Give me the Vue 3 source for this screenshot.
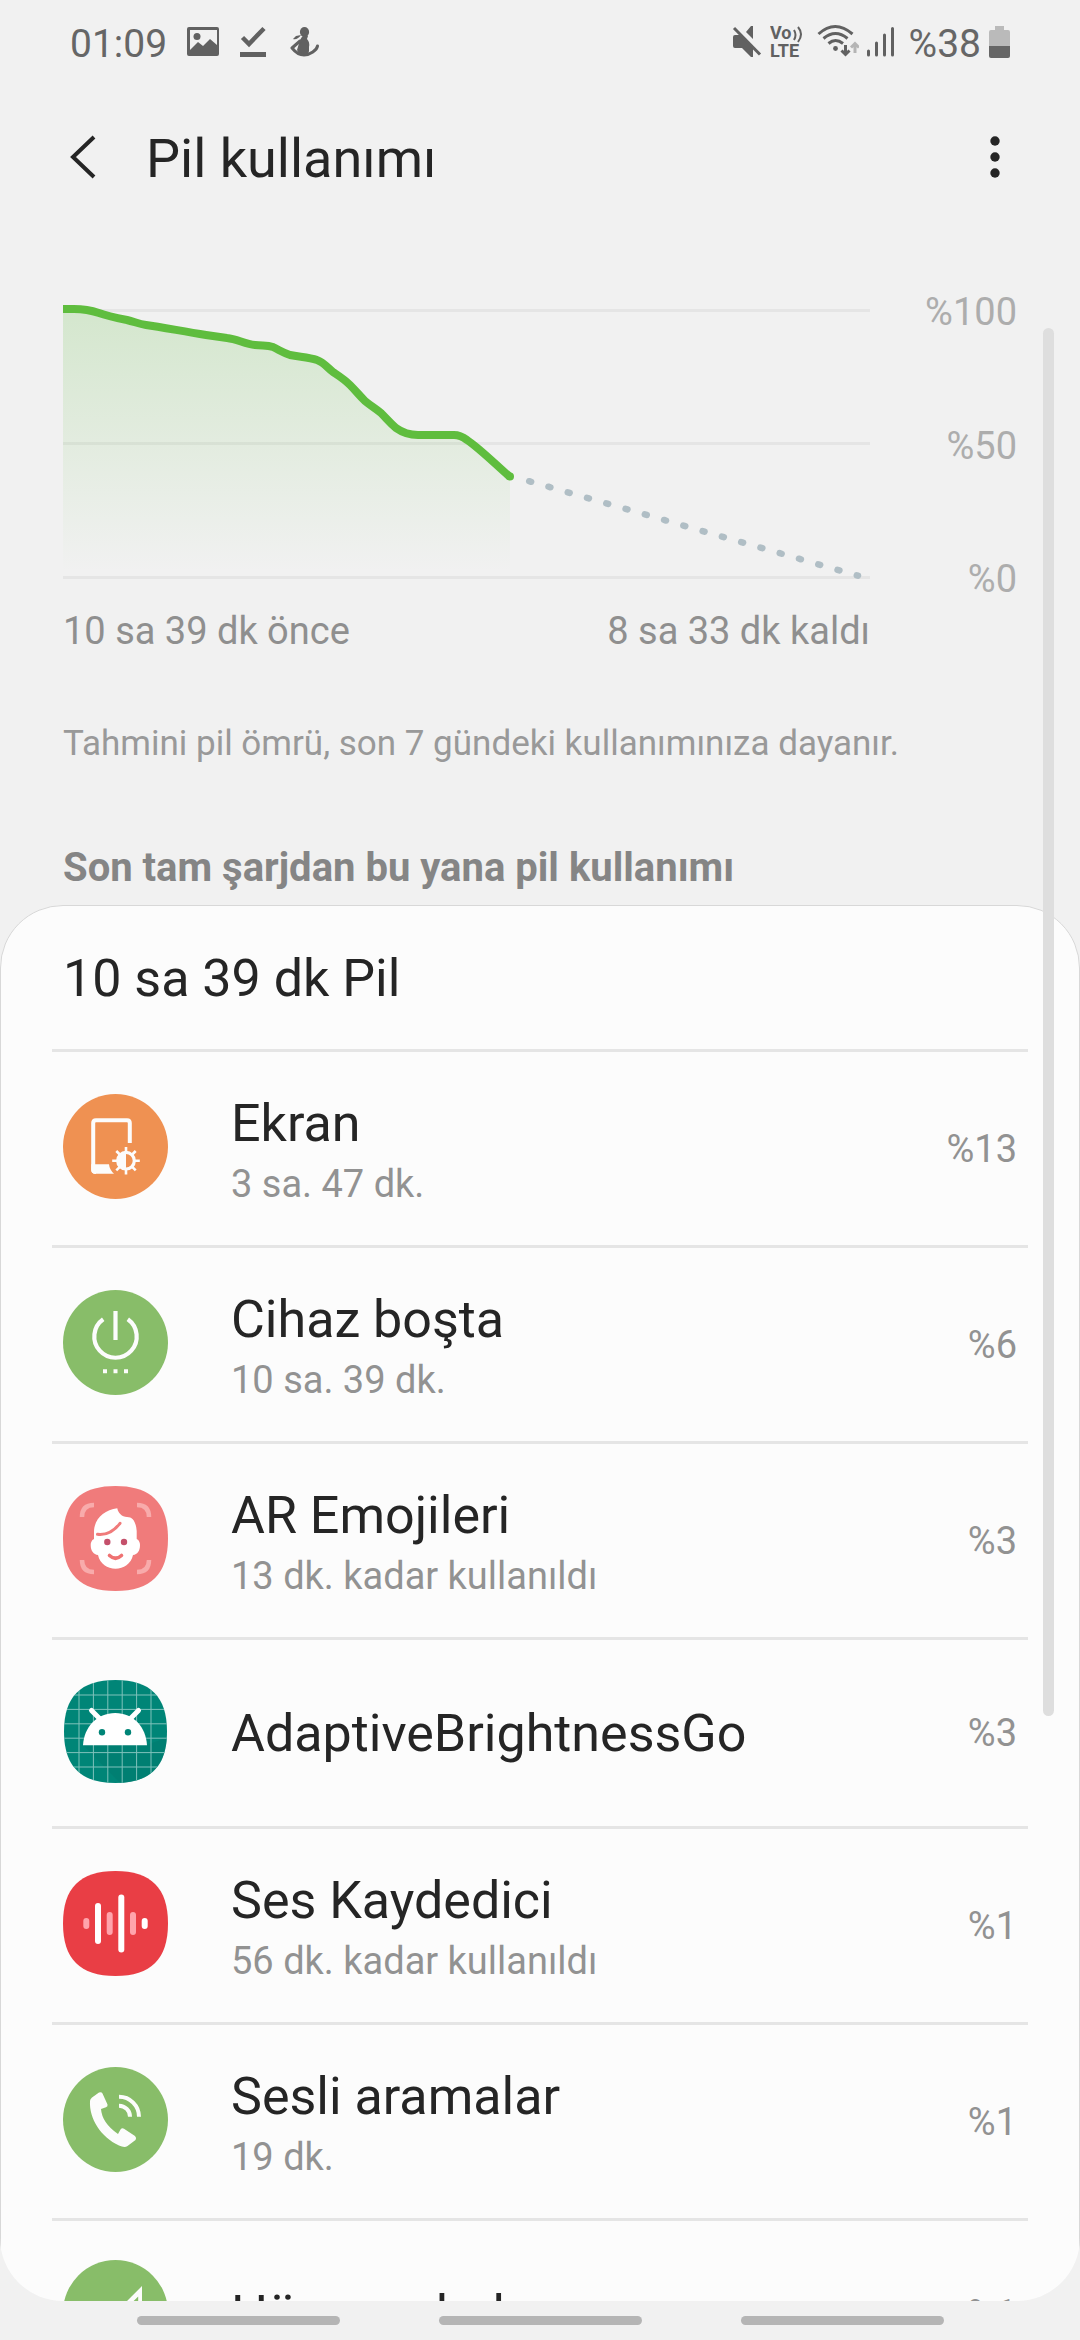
<script setup>
const squircle =
  'M52.5 0C88 0 105 17 105 52.5S88 105 52.5 105 0 88 0 52.5 17 0 52.5 0Z'

const gridSteps = [16, 30.4, 44.8, 59.2, 73.6, 88]

const soundBars = [
  { x: 23.3, h: 11, soft: true },
  { x: 35, h: 41, soft: false },
  { x: 46.7, h: 23, soft: true },
  { x: 58.3, h: 58, soft: false },
  { x: 70, h: 23, soft: true },
  { x: 81.7, h: 11, soft: false },
]

const levels = ['%100', '%50', '%0']

const curve =
  'M0 19H11C24 19 30 21 36 23 44 26 54 28 64 30 72 32 76 34 83 35 98 37 118 41 143 45L164 48C174 49 182 54 192 55 200 56 204 55 210 57 218 61 221 63 227 65 237 67 246 67 254 70 260 72 264 77 270 82 276 86 281 89 287 95 293 101 296 105 302 111 308 116 312 118 318 123 324 129 327 133 333 138 340 143 346 145 355 145H391C397 145 400 147 404 150 416 158 430 172 447 187'

const usage = [
  { icon: 'screen', name: 'Ekran', detail: '3 sa. 47 dk.', share: '%13' },
  { icon: 'idle', name: 'Cihaz boşta', detail: '10 sa. 39 dk.', share: '%6' },
  { icon: 'emoji', name: 'AR Emojileri', detail: '13 dk. kadar kullanıldı', share: '%3' },
  { icon: 'android', name: 'AdaptiveBrightnessGo', detail: '', share: '%3' },
  { icon: 'recorder', name: 'Ses Kaydedici', detail: '56 dk. kadar kullanıldı', share: '%1' },
  { icon: 'calls', name: 'Sesli aramalar', detail: '19 dk.', share: '%1' },
  { icon: 'cell', name: 'Hücre şebeke', detail: '', share: '%1' },
]
</script>

<template>
  <div class="screen">
    <div class="status">
      <div class="status-left">
        <span>01:09</span>
        <svg width="32" height="40" viewBox="187 24 32 40" aria-hidden="true">
          <path fill="#616161" fill-rule="evenodd" d="M189 27h28a2 2 0 0 1 2 2v25a2 2 0 0 1-2 2h-28a2 2 0 0 1-2-2V29a2 2 0 0 1 2-2Zm1 3v20l8-8 5 4 7-7 7 6V30Z" />
          <circle cx="197" cy="36.500" r="3.500" fill="#616161" />
        </svg>
        <svg width="30" height="40" viewBox="239 24 30 40" aria-hidden="true">
          <path d="M242.500 37.500l6.500 6.500 15-15.500" fill="none" stroke="#616161" stroke-width="4.500" />
          <path d="M240 52h26v5h-26z" fill="#616161" />
        </svg>
        <svg width="30" height="40" viewBox="289 24 30 40" fill="#616161" aria-hidden="true">
          <ellipse cx="304.500" cy="32" rx="4.600" ry="5" />
          <path d="M300 40q2-4 4-5l4 1-1 3q3 3 2 8 .5 4-1 8h-8l-3-5z" />
          <path d="M301 35l-5 1-3 3c3 1 6-1 8-4Z" />
          <path d="M300 41l-8 7c4 5 8 7 12 7 6 0 13-5 13.500-9" fill="none" stroke="#616161" stroke-width="3" stroke-linecap="round" stroke-linejoin="round" />
        </svg>
      </div>
      <div class="status-right">
        <svg width="30" height="40" viewBox="730 24 30 40" fill="#616161" aria-hidden="true">
          <path d="M731 37q0-2 2-2h5l13 13v9h-2l-9-9h-7q-2 0-2-2ZM751 26v13l-7-7 5-6Z" />
          <path d="M732 28l26 26.500" stroke="#616161" stroke-width="3" />
        </svg>
        <svg width="34" height="40" viewBox="769 24 34 40" aria-hidden="true">
          <g fill="#616161" font-family="Roboto, sans-serif" font-weight="700" font-size="18">
            <text x="769" y="39">Vo</text>
            <text x="769" y="57">LTE</text>
          </g>
          <path d="M793 30q3 5 0 10M797 27q6 7 0 15" fill="none" stroke="#616161" stroke-width="2" />
        </svg>
        <svg width="47" height="40" viewBox="811 24 47 40" fill="none" stroke="#616161" stroke-width="3" aria-hidden="true">
          <path d="M817.500 34q16.500-15 34 0M822.500 38.500q12-10 24 0M827.500 43.500q7-6 14.500 0" />
          <circle cx="834.500" cy="48.500" r="2.400" fill="#616161" stroke="none" />
          <path d="M844.500 45v9M840.500 50.500l4 4 4-4" />
          <path d="M854 53v-9M850 47.500l4-4 4 4" stroke="#b5b5b5" />
        </svg>
        <svg width="28" height="40" viewBox="867 24 28 40" stroke="#616161" stroke-width="3" stroke-linecap="round" aria-hidden="true">
          <path d="M868.500 51v4M876.500 43v12M884.500 35v20M892.500 28.500v26.500" />
        </svg>
        <span class="charge">%38</span>
        <svg width="21" height="40" viewBox="989 24 21 40" aria-hidden="true">
          <path d="M989 32q0-2 2-2h4v-4h9v4h4q2 0 2 2v14h-21z" fill="#bababa" />
          <path d="M989 46h21v10q0 2-2 2h-17q-2 0-2-2z" fill="#666" />
        </svg>
      </div>
    </div>

    <header class="bar">
      <button class="back" type="button" aria-label="Geri">
        <svg width="28" height="44" viewBox="0 0 28 44"><path d="M26 2 5 22l21 20" fill="none" stroke="#252525" stroke-width="4" /></svg>
      </button>
      <h1>Pil kullanımı</h1>
      <button class="more" type="button" aria-label="Diğer seçenekler">
        <svg width="10" height="44" viewBox="0 0 10 44" fill="#252525">
          <circle cx="5" cy="6" r="4.700" /><circle cx="5" cy="22" r="4.700" /><circle cx="5" cy="38" r="4.700" />
        </svg>
      </button>
    </header>

    <main class="scroller">
      <section class="chart">
        <div class="plot">
          <svg class="graph" viewBox="0 0 807 312" role="img" aria-label="Pil düzeyi">
            <defs>
              <linearGradient id="level-fill" x1="0" y1="19" x2="0" y2="282" gradientUnits="userSpaceOnUse">
                <stop offset="0" stop-color="#5fbd3e" stop-opacity="0.200" />
                <stop offset="1" stop-color="#5fbd3e" stop-opacity="0" />
              </linearGradient>
            </defs>
            <path d="M0 19h807v3H0zM0 152h807v3H0zM0 286h807v3H0z" fill="#e5e5e5" />
            <path :d="curve + 'V282H0Z'" fill="url(#level-fill)" />
            <path d="M466.200 191.200L795 285.700" fill="none" stroke="#b0bec5" stroke-width="6.500" stroke-linecap="round" stroke-dasharray="2 18.050" />
            <path :d="curve" fill="none" stroke="#5fbd3e" stroke-width="8" />
            <circle cx="447" cy="186.500" r="4" fill="#5fbd3e" />
          </svg>
          <div class="levels">
            <span v-for="level in levels" :key="level">{{ level }}</span>
          </div>
        </div>
        <div class="times">
          <span>10 sa 39 dk önce</span>
          <span>8 sa 33 dk kaldı</span>
        </div>
      </section>

      <p class="note">Tahmini pil ömrü, son 7 gündeki kullanımınıza dayanır.</p>
      <h2>Son tam şarjdan bu yana pil kullanımı</h2>

      <section class="card">
        <h3>10 sa 39 dk Pil</h3>
        <ul>
          <li v-for="item in usage" :key="item.name">
            <button class="row" :class="{ single: !item.detail }" type="button">
              <svg class="icon" width="105" height="105" viewBox="0 0 105 105" aria-hidden="true">
                <template v-if="item.icon === 'screen'">
                  <circle cx="52.500" cy="52.500" r="52.500" fill="#ef9152" />
                  <path d="M66.800 49V29q0-2.800-2.800-2.800H33q-2.800 0-2.800 2.800V75q0 3 2.800 3" fill="none" stroke="#fcfcfc" stroke-width="4" />
                  <path d="M28.200 70.300H46q.5 5.500 5 9.400H32q-3.800 0-3.800-3.800z" fill="#fcfcfc" />
                  <circle cx="63" cy="66.700" r="8.300" fill="none" stroke="#fcfcfc" stroke-width="3.200" />
                  <path d="M63 58a8.700 8.700 0 0 0 0 17.400z" fill="#fcfcfc" />
                  <path d="M63 53v5M63 75.500v5M49.200 66.700h5M71.800 66.700h5M53.300 57l3.500 3.500M69.200 72.900l3.500 3.500M53.300 76.400l3.500-3.500M69.200 60.500l3.500-3.500" stroke="#fcfcfc" stroke-width="2.600" />
                </template>
                <template v-else-if="item.icon === 'idle'">
                  <circle cx="52.500" cy="52.500" r="52.500" fill="#88bd69" />
                  <path d="M40.200 29.300a21.200 21.200 0 1 0 24.600 0M52.500 21v29" fill="none" stroke="#fcfcfc" stroke-width="4.200" />
                  <path d="M40 79.300h4v4h-4zM50.500 79.300h4v4h-4zM61 79.300h4v4h-4z" fill="#fcfcfc" />
                </template>
                <template v-else-if="item.icon === 'emoji'">
                  <path :d="squircle" fill="#f07b7b" />
                  <path d="M19 31q0-12 12-12M74 19q12 0 12 12M86 74q0 12-12 12M31 86q-12 0-12-12" fill="none" stroke="#f8abab" stroke-width="4.500" />
                  <path d="M54.300 22.300C41 24 31 33 31 46v7c-2.500 1-3.300 4-3.300 6 0 6 3 9.500 7.300 10 2 9 9.500 13.700 17.500 13.700S68 78 70 69c4.300-.5 7-4 7-10 0-2-.8-5-3.300-6v-8c-.7-9-3.700-14-9.700-14-5 0-9-4-9.700-8.700Z" fill="#fff" />
                  <path d="M34.500 48.300q13 1.500 22.500-11" fill="none" stroke="#f07b7b" stroke-width="3" stroke-linecap="round" />
                  <circle cx="44.300" cy="56" r="3.200" fill="#c4506b" /><circle cx="61" cy="56" r="3.200" fill="#c4506b" />
                  <path d="M46.500 69.500q6 5.500 12 0" fill="none" stroke="#ef7272" stroke-width="3.600" stroke-linecap="round" />
                </template>
                <template v-else-if="item.icon === 'android'">
                  <clipPath id="android-shape"><path :d="squircle" transform="translate(1 1) scale(0.981)" /></clipPath>
                  <g clip-path="url(#android-shape)">
                    <path d="M0 0h105v105H0z" fill="#008577" />
                    <path d="M20 66h64l21-8v47H58z" fill="#007a6d" fill-opacity="0.500" />
                    <path v-for="step in gridSteps" :key="step" :d="`M${step} 0V105M0 ${step}H105`" stroke="#7fc2bb" stroke-width="1" />
                  </g>
                  <path d="M20 66.300C21 48 34 34 52.200 34S83 48 84 66.300Z" fill="#fff" />
                  <path d="M28.500 31.500l9 9M75.500 31.500l-9 9" stroke="#fff" stroke-width="5" stroke-linecap="round" />
                  <circle cx="39" cy="53.300" r="3.200" fill="#008577" /><circle cx="65" cy="53.300" r="3.200" fill="#008577" />
                </template>
                <template v-else-if="item.icon === 'recorder'">
                  <path :d="squircle" fill="#e93e45" />
                  <rect v-for="bar in soundBars" :key="bar.x" :x="bar.x - 3" :y="52.500 - bar.h / 2" width="6" :height="bar.h" rx="3" :fill="bar.soft ? '#ffa4ac' : '#fff'" />
                </template>
                <template v-else-if="item.icon === 'calls'">
                  <circle cx="52.500" cy="52.500" r="52.500" fill="#88bd69" />
                  <path d="M27 34q0-2 2-3.500l7-5q2.500-1 3.500 1l5 11q.5 2-1.500 2.800l-5 1.700Q39 56 55 67l2.500-4.500q1.500-2 3.500-.8l11 7.300q2 2 .5 4l-8 6q-3 2-8.500-.5C38 70 26 52 27 34Z" fill="#fcfcfc" />
                  <path d="M56 29.700a20 20 0 0 1 20 20M56 38.700a11 11 0 0 1 11 11" fill="none" stroke="#fcfcfc" stroke-width="4" />
                </template>
                <template v-else>
                  <circle cx="52.500" cy="52.500" r="52.500" fill="#88bd69" />
                  <path d="M79 26v53H26zM75.200 36.500 36 75.200h39.200z" fill="#fcfcfc" fill-rule="evenodd" />
                </template>
              </svg>
              <span class="label">
                <span class="name">{{ item.name }}</span>
                <span v-if="item.detail" class="detail">{{ item.detail }}</span>
              </span>
              <span class="share">{{ item.share }}</span>
            </button>
          </li>
        </ul>
      </section>
      <div class="thumb"></div>
    </main>

    <nav class="gestures">
      <button type="button" aria-label="Son uygulamalar"></button>
      <button type="button" aria-label="Ana ekran"></button>
      <button type="button" aria-label="Geri dön"></button>
    </nav>
  </div>
</template>

<style>
body {
  background: #f1f1f1;
}
</style>

<style scoped>
.screen {
  display: flex;
  flex-direction: column;
  height: 100vh;
  overflow: hidden;
  background: #f1f1f1;
  color: #252525;
  font-family: Roboto, sans-serif;
}

button {
  margin: 0;
  padding: 0;
  border: 0;
  background: none;
  color: inherit;
  font: inherit;
}

h1,
h2,
h3,
p,
ul {
  margin: 0;
  padding: 0;
}

ul {
  list-style: none;
}

svg {
  display: block;
  flex: none;
}

.status {
  display: flex;
  flex: none;
  align-items: center;
  justify-content: space-between;
  height: 88px;
  padding: 0 70px;
  color: #666;
  font-size: 39px;
}

.status-left {
  display: flex;
  align-items: center;
  gap: 20px;
}

.status-right {
  display: flex;
  align-items: center;
  gap: 8px;
}

.charge {
  padding-left: 6px;
}

.bar {
  display: flex;
  flex: none;
  align-items: center;
  height: 142px;
  padding: 0 80px 0 68px;
}

.bar h1 {
  flex: 1;
  margin-left: 50px;
  font-size: 54px;
  font-weight: 400;
  line-height: 64px;
}

.back,
.more {
  padding-bottom: 4px;
}

.scroller {
  position: relative;
  flex: 1;
  min-height: 0;
  overflow: hidden;
  border-radius: 0 0 63px 63px;
}

.chart {
  padding: 60px 63px 0;
  font-size: 38px;
  line-height: 45px;
}

.plot {
  display: flex;
  justify-content: space-between;
}

.graph {
  flex: 1;
  min-width: 0;
}

.levels {
  display: flex;
  flex: none;
  flex-direction: column;
  justify-content: space-between;
  width: 147px;
  color: #adadad;
  text-align: right;
}

.times {
  display: flex;
  justify-content: space-between;
  margin: 7px 147px 0 0;
  color: #8f8f8f;
}

.note {
  margin: 70px 63px 0;
  color: #999;
  font-size: 35px;
  line-height: 40px;
}

h2 {
  margin: 82px 63px 15px;
  color: #858585;
  font-size: 40px;
  font-weight: 700;
  line-height: 44px;
}

.card {
  padding: 0 51px;
  border: 1px solid #d8d8d8;
  border-radius: 63px;
  background: #fcfcfc;
}

h3 {
  padding: 42px 11px 39px;
  font-size: 52px;
  font-weight: 400;
  line-height: 62px;
}

.row {
  display: flex;
  align-items: center;
  box-sizing: border-box;
  width: 100%;
  min-height: 196px;
  padding: 0 11px;
  border-top: 3px solid #e5e5e5;
  text-align: left;
}

.single {
  min-height: 189px;
}

.icon {
  margin-bottom: 4px;
}

.label {
  display: flex;
  flex: 1;
  flex-direction: column;
  gap: 8px;
  margin-left: 63px;
  padding-top: 2px;
}

.name {
  font-size: 52px;
  line-height: 60px;
}

.detail {
  color: #929292;
  font-size: 38px;
  line-height: 44px;
}

.share {
  color: #929292;
  font-size: 38px;
}

.thumb {
  position: absolute;
  top: 98px;
  right: 26px;
  width: 11px;
  height: 67%;
  border-radius: 6px;
  background: #dedede;
}

.gestures {
  display: flex;
  flex: none;
  justify-content: center;
  gap: 99px;
  padding: 15px 0;
}

.gestures button {
  width: 203px;
  height: 9px;
  border-radius: 5px;
  background: #b5b5b5;
}
</style>
